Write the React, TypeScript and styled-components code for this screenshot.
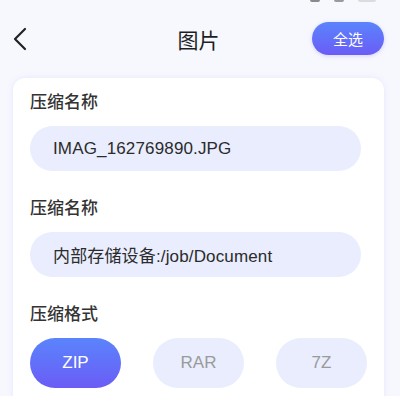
import React, { useState } from 'react';
import styled, { createGlobalStyle } from 'styled-components';

const GlobalStyle = createGlobalStyle`
  html, body {
    margin: 0;
    padding: 0;
    background: #f7f8fe;
  }
  body {
    font-family: "Liberation Sans", "Noto Sans CJK SC", sans-serif;
    overflow: hidden;
  }
`;

const Page = styled.div`
  width: 400px;
  height: 396px;
  overflow: hidden;
  background: #f7f8fe;
`;

const StatusStrip = styled.div`
  display: flex;
  justify-content: flex-end;
  gap: 14px;
  height: 3px;
  padding-right: 24px;
  overflow: hidden;
`;

const StatusDot = styled.span<{ $w: number; $c: string }>`
  width: ${p => p.$w}px;
  height: 2px;
  background: ${p => p.$c};
  border-radius: 0 0 2px 2px;
`;

const Header = styled.div`
  display: grid;
  grid-template-columns: 1fr auto 1fr;
  align-items: center;
  padding: 19px 16px 0 13px;
  height: 33px;
`;

const BackButton = styled.button`
  justify-self: start;
  display: flex;
  align-items: center;
  background: none;
  border: none;
  padding: 0;
  cursor: pointer;
`;

const Title = styled.h1`
  margin: 0;
  font-size: 21px;
  font-weight: 400;
  color: #1e1e1e;
`;

const SelectAllButton = styled.button`
  justify-self: end;
  width: 72px;
  height: 33px;
  border: none;
  border-radius: 17px;
  background: linear-gradient(180deg, #5a84fc 0%, #6b5cf6 100%);
  box-shadow: 0 1px 4px rgba(100, 100, 240, 0.25);
  color: #fff;
  font-family: "Liberation Sans", "Noto Sans CJK SC", sans-serif;
  font-size: 15px;
  cursor: pointer;
`;

const Card = styled.div`
  margin: 23px 16px 0 13px;
  padding: 14px 23px 20px 17px;
  background: #fff;
  border-radius: 12px;
  box-shadow: 0 0 6px rgba(120, 130, 240, 0.14);
  display: flex;
  flex-direction: column;
`;

const Label = styled.div<{ $top?: number }>`
  margin-top: ${p => p.$top ?? 0}px;
  font-size: 17px;
  line-height: 22px;
  font-weight: 500;
  color: #333;
`;

const Field = styled.div`
  margin-top: 12px;
  height: 45px;
  border-radius: 23px;
  background: #e9edfd;
  display: flex;
  align-items: center;
  padding-left: 23px;
  font-size: 17px;
  letter-spacing: 0.15px;
  color: #2b2b2b;
`;

const FormatRow = styled.div`
  margin-top: 12px;
  margin-right: -6px;
  display: flex;
  justify-content: space-between;
`;

const FormatButton = styled.button<{ $active: boolean }>`
  width: 91px;
  height: 50px;
  border: none;
  border-radius: 25px;
  font-family: "Liberation Sans", sans-serif;
  font-size: 17px;
  cursor: pointer;
  color: ${p => (p.$active ? '#fff' : '#9a9a9a')};
  background: ${p =>
    p.$active ? 'linear-gradient(180deg, #5a84fc 0%, #6b5cf6 100%)' : '#e9edfd'};
`;

const ChevronLeft = () => (
  <svg width="14" height="24" viewBox="0 0 14 24" fill="none">
    <path d="M12 2 L2 12 L12 22" stroke="#222" strokeWidth="2.2" strokeLinecap="round" strokeLinejoin="round" />
  </svg>
);

const formats = ['ZIP', 'RAR', '7Z'];

const App: React.FC = () => {
  const [format, setFormat] = useState('ZIP');

  return (
    <Page>
      <GlobalStyle />
      <StatusStrip>
        <StatusDot $w={10} $c="#8a8a8a" />
        <StatusDot $w={10} $c="#9a9a9a" />
        <StatusDot $w={18} $c="#dcdcdc" />
      </StatusStrip>
      <Header>
        <BackButton aria-label="返回">
          <ChevronLeft />
        </BackButton>
        <Title>图片</Title>
        <SelectAllButton>全选</SelectAllButton>
      </Header>
      <Card>
        <Label>压缩名称</Label>
        <Field>IMAG_162769890.JPG</Field>
        <Label $top={27}>压缩名称</Label>
        <Field>内部存储设备:/job/Document</Field>
        <Label $top={27}>压缩格式</Label>
        <FormatRow>
          {formats.map(f => (
            <FormatButton key={f} $active={f === format} onClick={() => setFormat(f)}>
              {f}
            </FormatButton>
          ))}
        </FormatRow>
      </Card>
    </Page>
  );
};

export default App;
